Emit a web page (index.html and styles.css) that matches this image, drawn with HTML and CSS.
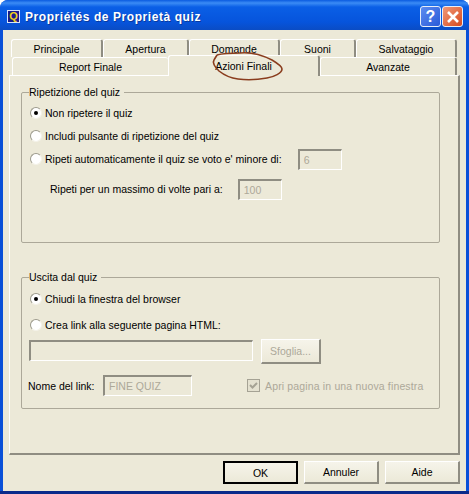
FILE: index.html
```html
<!DOCTYPE html>
<html lang="it">
<head>
    <meta charset="utf-8">
    <title>Propriétés de Proprietà quiz</title>
    <link rel="stylesheet" href="styles.css">
</head>
<body>
    <div class="window">
        <div class="titlebar">
            <span class="app-icon">Q</span>
            <span class="title">Propriétés de Proprietà quiz</span>
            <span class="title-btn help-btn">?</span>
            <span class="title-btn close-btn">
                <svg viewBox="0 0 14 14" width="14" height="14">
                    <path d="M2 2l10 10M12 2L2 12" stroke="#fff" stroke-width="2.6" fill="none"/>
                </svg>
            </span>
        </div>

        <div class="dialog">
            <div class="tab-row tab-row-back">
                <div class="tab tab-principale">Principale</div>
                <div class="tab tab-apertura">Apertura</div>
                <div class="tab tab-domande">Domande</div>
                <div class="tab tab-suoni">Suoni</div>
                <div class="tab tab-salva">Salvataggio</div>
            </div>
            <div class="tab-row tab-row-front">
                <div class="tab tab-report">Report Finale</div>
                <div class="tab tab-azioni selected">Azioni Finali</div>
                <div class="tab tab-avanzate">Avanzate</div>
            </div>

            <div class="panel">
                <fieldset class="group group-repeat">
                    <legend>Ripetizione del quiz</legend>
                    <div class="row row-first"><span class="radio checked"></span>Non ripetere il quiz</div>
                    <div class="row"><span class="radio"></span>Includi pulsante di ripetizione del quiz</div>
                    <div class="row">
                        <span class="radio"></span>Ripeti automaticamente il quiz se voto e' minore di:
                        <span class="input input-small input-voto">6</span>
                    </div>
                    <div class="row row-indent">
                        Ripeti per un massimo di volte pari a:
                        <span class="input input-small input-max">100</span>
                    </div>
                </fieldset>

                <fieldset class="group group-exit">
                    <legend>Uscita dal quiz</legend>
                    <div class="row row-first"><span class="radio checked"></span>Chiudi la finestra del browser</div>
                    <div class="row row-create"><span class="radio"></span>Crea link alla seguente pagina HTML:</div>
                    <div class="row row-browse">
                        <span class="input input-wide"></span>
                        <span class="btn btn-disabled">Sfoglia...</span>
                    </div>
                    <div class="row row-link">
                        <span class="link-label">Nome del link:</span>
                        <span class="input input-name">FINE QUIZ</span>
                        <span class="check">
                            <svg viewBox="0 0 11 11" width="11" height="11">
                                <path d="M2 5l2.5 2.5L9 3" stroke="#a5a294" stroke-width="2" fill="none"/>
                            </svg>
                        </span>
                        <span class="check-label">Apri pagina in una nuova finestra</span>
                    </div>
                </fieldset>
            </div>

            <div class="actions">
                <span class="btn btn-default">OK</span>
                <span class="btn">Annuler</span>
                <span class="btn">Aide</span>
            </div>
        </div>

        <!-- hand drawn circle on top of the tab -->
        <svg class="scribble" viewBox="0 0 76 32" width="76" height="32">
            <path d="M7 5C14 3 22 3 30 3C40 2 52 5 62 10C67 13 72 16 72 19C72 23 64 27 57 28C46 30 36 30 28 29C20 28 14 25 9 21C5 17 2 13 4 10L7 5" fill="none" stroke="#8a3d1e" stroke-width="1.6"/>
        </svg>
    </div>
</body>
</html>
```

FILE: styles.css
```css
* {
    margin: 0;
    padding: 0;
    box-sizing: border-box;
}

body {
    background: #fff;
    font-family: "Liberation Sans", Arial, sans-serif;
    font-size: 10.5px;
    color: #000;
    overflow: hidden;
}

.window {
    position: relative;
    width: 469px;
    height: 494px;
    display: flex;
    flex-direction: column;
    background: #0a50d8;
    border-bottom: 3px solid #0a2a8a;
    border-radius: 8px 8px 0 0;
    overflow: hidden;
}

.titlebar {
    height: 30px;
    display: flex;
    align-items: center;
    padding: 3px 6px 0 7px;
    background: linear-gradient(#0a5be0 0, #3b8cf5 3px, #0a5fe6 7px, #0654dc 22px, #0a4cc4 30px);
}

.app-icon {
    width: 13px;
    height: 13px;
    margin-right: 5px;
    background: #1a1a8c;
    border: 1px solid #d8e4f8;
    color: #f2d21a;
    font: bold 11px/11px "Liberation Sans", sans-serif;
    text-align: center;
}

.title {
    flex: 1;
    color: #fff;
    font-weight: bold;
    font-size: 12px;
    letter-spacing: 0.57px;
    text-shadow: 1px 1px 0 #0a3a9c;
}

.title-btn {
    width: 21px;
    height: 21px;
    margin-left: 1px;
    display: flex;
    align-items: center;
    justify-content: center;
    border: 1px solid #e8eef8;
    border-radius: 3px;
}

.help-btn {
    background: linear-gradient(135deg, #5c8cf0, #2a5ad8);
    color: #fff;
    font-weight: bold;
    font-size: 16px;
}

.close-btn {
    background: linear-gradient(135deg, #f09878, #d84a1e);
}

.dialog {
    flex: 1;
    display: flex;
    flex-direction: column;
    margin: 0 3px;
    padding: 9px 6px 0;
    background: #ece9d8;
}

.tab-row {
    display: flex;
    position: relative;
}

.tab {
    display: flex;
    align-items: center;
    justify-content: center;
    background: #ece9d8;
    border: 1px solid #fff;
    border-bottom: none;
    border-right: 2px solid #8f8d82;
    border-radius: 3px 3px 0 0;
}

.tab-row-back {
    height: 18px;
    padding-left: 2px;
}

.tab-row-front {
    height: 18px;
    padding-left: 3px;
    z-index: 1;
}

.tab-principale { width: 92px; }
.tab-apertura { width: 86px; }
.tab-domande { width: 91px; }
.tab-suoni { width: 76px; }
.tab-salva { width: 101px; }
.tab-report { width: 156px; border-right: none; }
.tab-azioni { width: 152px; height: 21px; margin-top: -2px; padding-bottom: 1px; z-index: 1; }
.tab-avanzate { width: 137px; }

.panel {
    height: 380px;
    padding: 17px 18px 0 11px;
    border: 1px solid #fff;
    border-right: 2px solid #8f8d82;
    border-bottom: 2px solid #8f8d82;
}

.group {
    border: 1px solid #aca899;
    border-radius: 2px;
    padding: 0 8px;
}

.group legend {
    margin-left: -1px;
    padding: 0 4px 0 0;
}

.group-repeat {
    height: 157px;
    margin-top: -7px;
}

.group-exit {
    height: 138px;
    margin-top: 28px;
}

.row {
    display: flex;
    align-items: center;
    height: 14px;
    margin-top: 9px;
    white-space: nowrap;
}

.row-first {
    margin-top: 8px;
}

.group-exit .row-first {
    margin-top: 9px;
}

.radio {
    width: 12px;
    height: 12px;
    margin-right: 3px;
    border-radius: 50%;
    background: #fff;
    border: 1px solid #9c9a8c;
    border-right-color: #f4f2e8;
    border-bottom-color: #f4f2e8;
    position: relative;
}

.radio.checked::after {
    content: "";
    position: absolute;
    left: 3px;
    top: 3px;
    width: 4px;
    height: 4px;
    border-radius: 50%;
    background: #000;
}

.input {
    display: block;
    height: 21px;
    line-height: 18px;
    padding-left: 4px;
    color: #aca899;
    background: #ece9d8;
    border: 1px solid #fff;
    border-top: 2px solid #8f8d82;
    border-left: 2px solid #8f8d82;
}

.input-small {
    width: 44px;
}

.input-voto {
    margin-left: 16px;
}

.row-indent {
    margin-top: 16px;
    padding-left: 20px;
}

.input-max {
    margin-left: 15px;
}

.row-create {
    margin-top: 12px;
}

.row-browse {
    align-items: flex-start;
    height: 25px;
    margin-top: 7px;
}

.input-wide {
    width: 224px;
    margin-top: 1px;
    margin-left: -1px;
}

.row-link {
    height: 21px;
    margin-top: 11px;
}

.link-label {
    width: 75px;
    margin-left: -2px;
}

.input-name {
    width: 89px;
}

.check {
    width: 13px;
    height: 13px;
    margin-left: 55px;
    margin-right: 5px;
    border: 1px solid #a5a294;
    background: #e4e1d0;
    display: flex;
}

.check-label {
    color: #aca899;
    letter-spacing: 0.15px;
}

.btn {
    display: flex;
    align-items: center;
    justify-content: center;
    width: 75px;
    height: 23px;
    background: linear-gradient(#f6f4ea, #ece9d8);
    border: 1px solid #fff;
    border-right: 2px solid #8f8d82;
    border-bottom: 2px solid #8f8d82;
}

.btn-disabled {
    width: 60px;
    height: 25px;
    margin-left: 8px;
    color: #aca899;
}

.btn-default {
    border: 2px solid #000;
}

.actions {
    display: flex;
    justify-content: flex-end;
    gap: 6px;
    margin-top: 6px;
}

.scribble {
    position: absolute;
    left: 210px;
    top: 50px;
    z-index: 5;
}
```
